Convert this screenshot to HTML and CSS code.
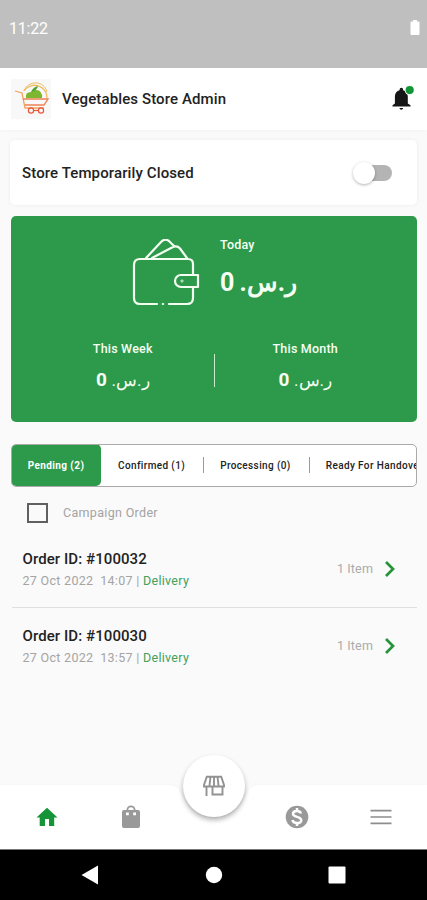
FILE: index.html
```
<!DOCTYPE html>
<html lang="en">
<head>
<meta charset="utf-8">
<title>Vegetables Store Admin</title>
<link rel="stylesheet" href="styles.css">
</head>
<body>
<div class="status">
  <span>11:22</span>
  <svg width="10" height="15" viewBox="0 0 10 15"><path fill="#fff" d="M3 0h4v1.500h1.500Q9.500 1.500 9.500 2.500V14q0 1-1 1h-7q-1 0-1-1V2.500q0-1 1-1H3z"/></svg>
</div>
<header class="header">
  <div class="logo">
    <svg width="40" height="40" viewBox="0 0 40 40" fill="none">
      <path d="M13 12A12.500 12.500 0 0 1 36 19" stroke="#f0bd62" stroke-width="1.300"/>
      <path d="M13 12C17 1 33 1 36 13" stroke="#f0bd62" stroke-width="1"/>
      <path d="M15 19q-1-6 5-6 2-2 5-2 4 0 5 3 2 2 1 5z" fill="#7cb82f"/>
      <path d="M20 13q2-5 7-6-1 5-7 6z" fill="#4fa42c"/>
      <path d="M4 12l7 2 3 15h19" stroke="#f2a45d" stroke-width="1.300"/>
      <path d="M12 20h25l-4 6H14" stroke="#ed8052" stroke-width="1.300"/>
      <circle cx="20" cy="31.500" r="2.600" stroke="#e8573a" stroke-width="1.200"/>
      <circle cx="30" cy="31.500" r="2.600" stroke="#e8573a" stroke-width="1.200"/>
      <path d="M23 31.500h4" stroke="#e8573a" stroke-width="1.200"/>
    </svg>
  </div>
  <h1>Vegetables Store Admin</h1>
  <div class="bell">
    <svg width="26" height="26" viewBox="0 0 26 26"><path fill="#161616" d="M9.400 22h3.800q-.4 1.800-1.900 1.800T9.400 22zM17.800 17.500v-7c0-3.200-1.700-5.600-4.700-6.300v-.7a1.700 1.700 0 0 0-3.500 0v.7c-3 .7-4.700 3.100-4.700 6.300v7L2.500 19.300v1.200h18v-1.200z"/><circle cx="19.500" cy="4.300" r="4.800" fill="#fff"/><circle cx="19.700" cy="4.100" r="4.100" fill="#119536"/></svg>
  </div>
</header>
<section class="closed">
  <span>Store Temporarily Closed</span>
  <div class="switch"><i></i></div>
</section>
<section class="earnings">
  <div class="today">
    <svg class="wallet" width="68" height="68" viewBox="0 0 68 68" fill="none" stroke="#f4fff2" stroke-width="2.200" stroke-linecap="round">
      <path d="M25 65H8q-6 0-6-6V26q0-6 6-6h48q5 0 5 5v11M61 49v10q0 6-6 6H37"/>
      <path d="M30.800 65h.3"/>
      <path d="M14 19L29 3q4-4 8-1l5 5M20 19L40 8.500q5-2.500 8 1L55 19"/>
      <path d="M66 36v12H49a6 6 0 0 1 0-12h17z" stroke-linejoin="round"/>
      <circle cx="50" cy="42" r=".4"/>
    </svg>
    <div>
      <div class="label">Today</div>
      <div class="amount big">ر.س. 0</div>
    </div>
  </div>
  <div class="periods">
    <div class="period"><div class="label">This Week</div><div class="amount"><span class="currency">ر.س.</span> 0</div></div>
    <div class="rule"></div>
    <div class="period"><div class="label">This Month</div><div class="amount"><span class="currency">ر.س.</span> 0</div></div>
  </div>
</section>
<nav class="tabs">
  <div class="tab active">Pending (2)</div>
  <div class="tab">Confirmed (1)</div>
  <div class="tab">Processing (0)</div>
  <div class="tab">Ready For Handover</div>
</nav>
<div class="campaign"><span class="box"></span><span>Campaign Order</span></div>
<main class="orders">
  <article class="order">
    <div><h2>Order ID: #100032</h2><p>27 Oct 2022 &nbsp;14:07 | <b>Delivery</b></p></div>
    <div class="items">1 Item<svg width="12" height="18" viewBox="0 0 12 18"><path d="M2 2l7 7-7 7" fill="none" stroke="#259339" stroke-width="2.700"/></svg></div>
  </article>
  <article class="order">
    <div><h2>Order ID: #100030</h2><p>27 Oct 2022 &nbsp;13:57 | <b>Delivery</b></p></div>
    <div class="items">1 Item<svg width="12" height="18" viewBox="0 0 12 18"><path d="M2 2l7 7-7 7" fill="none" stroke="#259339" stroke-width="2.700"/></svg></div>
  </article>
</main>
<footer class="bottom">
  <svg class="bar" width="427" height="64" viewBox="0 0 427 64"><path fill="#fff" d="M0 0H169Q177 0 180 7C187 24 198 33 214 33S241 24 248 7Q251 0 259 0H427V64H0z"/></svg>
  <div class="fab">
    <svg width="24" height="24" viewBox="0 0 24 24" fill="none" stroke="#929292" stroke-width="1.900"><path d="M4 2.800h16M5 2L2 11v1.500h20V11L19 2M8.500 2.500L7.500 11.500M12 2.500v9M15.500 2.500l1 9M4.500 11.500v10.500M10.500 13v7.500H20.500v-9"/></svg>
  </div>
  <div class="nav">
    <div><svg width="24" height="24" viewBox="0 0 24 24"><path fill="#159438" d="M10 21v-7h4v7h5.200V12.500H22.500L12 2.700 1.500 12.500h3.200V21z"/></svg></div>
    <div><svg width="24" height="24" viewBox="0 0 24 24"><path fill="#999" d="M19 5h-2.500a4.500 4.500 0 0 0-9 0H5q-2 0-2 2v14q0 2 2 2h14q2 0 2-2V7q0-2-2-2zM12 2.300A2.700 2.700 0 0 1 14.700 5H9.300A2.700 2.700 0 0 1 12 2.300zM7 7.500h2.800v2.800H7zM14.200 7.500H17v2.800h-2.800z" fill-rule="evenodd"/></svg></div>
    <div></div>
    <div><svg width="24" height="24" viewBox="0 0 24 24"><circle cx="12" cy="12" r="11.300" fill="#999"/><path d="M16 8.500Q15.200 5.900 12 5.900c-2.500 0-4 1.200-4 2.900 0 4.200 8.200 2 8.200 6.400 0 1.800-1.700 2.900-4.200 2.900-2.800 0-4.200-1.200-4.600-3M12 3v3M12 18v3" fill="none" stroke="#fff" stroke-width="2.500"/></svg></div>
    <div><svg width="24" height="24" viewBox="0 0 24 24"><path d="M1.500 5.600h21M1.500 12h21M1.500 18.400h21" stroke="#8d8d8d" stroke-width="1.700"/></svg></div>
  </div>
</footer>
<div class="system">
  <svg width="20" height="20" viewBox="0 0 20 20"><path fill="#fff" d="M1.500 10L18 .5v19z"/></svg>
  <svg width="18" height="18" viewBox="0 0 18 18"><circle fill="#fff" cx="9" cy="9" r="8.200"/></svg>
  <svg width="18" height="18" viewBox="0 0 18 18"><rect fill="#fff" x=".5" y=".5" width="17" height="17" rx="1"/></svg>
</div>
</body>
</html>
```
FILE: styles.css
```
* { box-sizing: border-box; }
body {
  margin: 0;
  width: 427px;
  height: 900px;
  overflow: hidden;
  display: flex;
  flex-direction: column;
  background: #fafafa;
  color: #222;
  font-family: Roboto, "Liberation Sans", sans-serif;
}
svg { display: block; flex: none; }
h1, h2, p { margin: 0; }
.status {
  height: 68px;
  flex: none;
  background: #bfbfbf;
  color: #fff;
  padding: 19px 7px 0 9px;
  display: flex;
  justify-content: space-between;
  font-size: 16px;
  line-height: 19px;
  letter-spacing: -.2px;
}
.status svg { margin-top: 1px; }
.header {
  height: 62px;
  flex: none;
  background: #fff;
  box-shadow: 0 1px 3px rgba(0,0,0,.03);
  display: flex;
  align-items: center;
  padding: 0 11px 0 11px;
}
.logo { width: 40px; height: 40px; background: #f8f8f8; }
.header h1 {
  margin-left: 11px;
  flex: 1;
  font-size: 15px;
  font-weight: 500;
  letter-spacing: .11px;
}
.closed {
  margin: 10px 10px 0;
  height: 65px;
  flex: none;
  background: #fff;
  border-radius: 5px;
  box-shadow: 0 0 4px rgba(0,0,0,.06);
  display: flex;
  align-items: center;
  justify-content: space-between;
  padding: 0 25px 0 12px;
  font-size: 15px;
  font-weight: 500;
  letter-spacing: .12px;
}
.switch {
  width: 35px;
  height: 16px;
  border-radius: 8px;
  background: #b4b4b4;
  display: flex;
  align-items: center;
}
.switch i {
  width: 22px;
  height: 22px;
  margin-left: -4px;
  border-radius: 50%;
  background: #fff;
  box-shadow: 0 1px 3px rgba(0,0,0,.3);
}
.earnings {
  margin: 11px 10px 0 11px;
  height: 206px;
  flex: none;
  border-radius: 5px;
  background: #2c9a4a;
  color: #f6fff4;
}
.today { height: 118px; display: flex; padding: 23px 0 0 121px; gap: 20px; }
.label { font-size: 12.5px; line-height: 14px; font-weight: 500; letter-spacing: .2px; }
.amount { font-size: 19px; line-height: 22px; font-weight: 700; white-space: nowrap; }
.currency { font-size: 17px; font-weight: 400; }
.big { margin-top: 16px; font-size: 25px; line-height: 30px; letter-spacing: -.4px; word-spacing: -1px; }
.today .label { margin-top: -1px; }
.periods { display: flex; }
.period { flex: 1; text-align: center; padding: 8px 0 0 21px; }
.rule + .period { padding: 8px 21px 0 0; }
.period .amount { margin-top: 13px; }
.rule { width: 1px; height: 33px; margin-top: 20px; background: #c7eacb; }
.tabs {
  margin: 22px 10px 0 11px;
  height: 43px;
  flex: none;
  display: flex;
  overflow: hidden;
  background: #fff;
  border: 1px solid #aaa;
  border-radius: 5px;
  font-size: 10px;
  font-weight: 500;
  white-space: nowrap;
}
.tab {
  flex: none;
  display: flex;
  align-items: center;
  letter-spacing: .38px;
  padding: 0 18px 1px 17px;
}
.tab + .tab + .tab { padding-left: 16px; }
.tab + .tab + .tab::before {
  content: "";
  width: 1px;
  height: 16px;
  margin: 0 16px 0 -16px;
  background: #999;
}
.tab.active {
  width: 90px;
  margin: -1px 0 0 -1px;
  padding: 0;
  justify-content: center;
  border-radius: 5px;
  background: #2c9a4a;
  color: #fff;
  letter-spacing: .4px;
  font-weight: 700;
}
.campaign {
  height: 52px;
  flex: none;
  display: flex;
  align-items: center;
  gap: 15px;
  padding: 0 0 1px 27px;
  color: #a3a3a3;
  font-size: 12.5px;
  letter-spacing: .32px;
}
.box { width: 21px; height: 20px; border: 2px solid #606060; }
.orders { margin: 0 10px 0 12px; }
.order {
  height: 77px;
  display: flex;
  justify-content: space-between;
  padding: 18px 21px 0 10.5px;
}
.order:first-child { height: 69px; padding-top: 10px; border-bottom: 1px solid #e0e0e0; }
.order h2 { font-size: 15px; line-height: 20px; font-weight: 500; letter-spacing: .08px; }
.order p { font-size: 12.5px; line-height: 16px; color: #a4a4a4; margin-top: 4px; letter-spacing: .3px; }
.order b { color: #43a15b; font-weight: 400; }
.items { height: 39px; display: flex; align-items: center; gap: 11px; font-size: 12.5px; letter-spacing: .15px; color: #aaa; }
.bottom { margin-top: auto; height: 64px; flex: none; position: relative; }
.bar { position: absolute; left: 0; top: 0; filter: drop-shadow(0 -1px 1px rgba(0,0,0,.015)); }
.nav { position: absolute; inset: 0; display: flex; padding: 0 4.5px 0 5.5px; }
.nav div { flex: 1; display: flex; align-items: center; justify-content: center; }
.fab {
  position: absolute;
  left: 183px;
  top: -30px;
  width: 62px;
  height: 62px;
  border-radius: 50%;
  background: #fff;
  box-shadow: 0 3px 5px rgba(0,0,0,.3);
  display: flex;
  align-items: center;
  justify-content: center;
}
.system {
  height: 51px;
  flex: none;
  background: #000;
  border-top: 1px solid #777;
  display: flex;
  align-items: center;
  justify-content: space-between;
  padding: 0 81px 0 80px;
}
```
